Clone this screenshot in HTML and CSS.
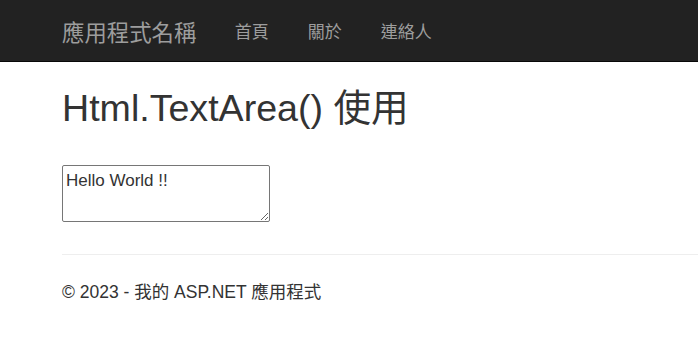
FILE: index.html
```html
<!DOCTYPE html>
<html lang="zh-Hant">

<head>
    <meta charset="UTF-8">
    <meta name="viewport" content="width=device-width, initial-scale=1">
    <title>Html.TextArea() 使用 - 我的 ASP.NET 應用程式</title>
    <link rel="stylesheet" href="styles.css">
</head>

<body>

    <!-- 導覽列 -->
    <div class="navbar">
        <div class="container nav-inner">
            <a class="brand" href="#">應用程式名稱</a>
            <ul class="nav">
                <li><a href="#">首頁</a></li>
                <li><a href="#">關於</a></li>
                <li><a href="#">連絡人</a></li>
            </ul>
        </div>
    </div>

    <div class="container body-content">
        <h1 class="page-title">Html.TextArea() 使用</h1>

        <textarea class="demo-text" name="demo">Hello World !!</textarea>

        <hr>
        <footer class="footer">
            <p>© 2023 - 我的 ASP.NET 應用程式</p>
        </footer>
    </div>

</body>

</html>
```

FILE: styles.css
```css
* {
    box-sizing: border-box;
}

body {
    margin: 0;
    font-family: "Liberation Sans", Arial, "Noto Sans CJK TC", sans-serif;
    color: #333333;
    background: #ffffff;
}

.container {
    padding-left: 62px;
}

.navbar {
    background-color: #222222;
    border-bottom: 1px solid #080808;
    height: 62px;
}

.nav-inner {
    display: flex;
    align-items: center;
    height: 100%;
}

.brand {
    font-size: 22.4px;
    color: #9d9d9d;
    text-decoration: none;
    margin-right: 19px;
}

.nav {
    display: flex;
    list-style: none;
    margin: 0;
    padding: 0;
}

.nav a {
    display: block;
    padding: 0 19.5px;
    font-size: 17px;
    color: #9d9d9d;
    text-decoration: none;
}

.page-title {
    font-size: 37.6px;
    font-weight: 400;
    line-height: 42px;
    margin: 25px 0 36px;
}

.demo-text {
    display: block;
    width: 208px;
    height: 57px;
    font-family: "Liberation Sans", Arial, sans-serif;
    font-size: 17px;
    line-height: 20px;
    color: #333333;
    padding: 5px 3px 3px;
    border: 1px solid #767676;
    border-radius: 2px;
    margin: 0;
    resize: both;
}

hr {
    border: 0;
    border-top: 1px solid #eeeeee;
    margin: 32px 0 0;
}

.footer p {
    font-size: 17.5px;
    line-height: 24px;
    margin: 25px 0 0;
}
```
